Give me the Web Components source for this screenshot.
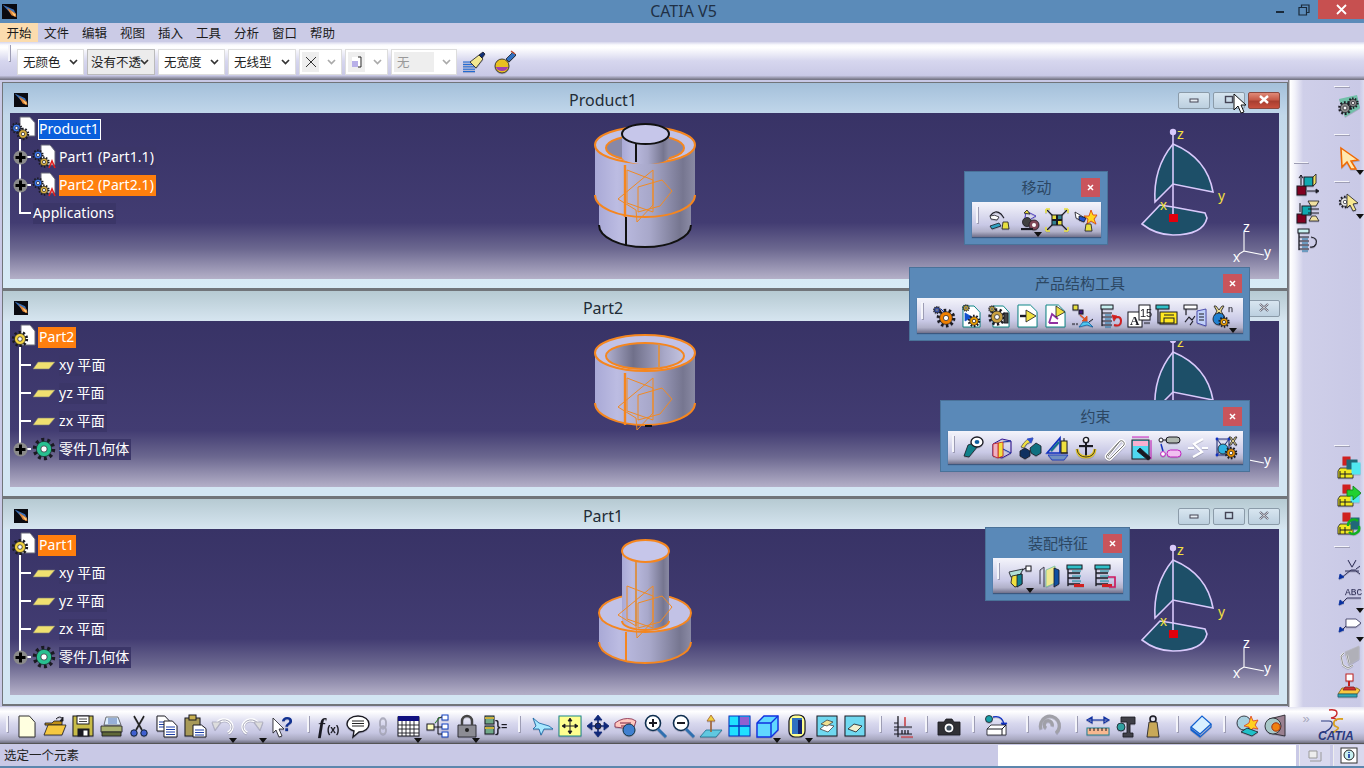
<!DOCTYPE html>
<html lang="zh">
<head>
<meta charset="utf-8">
<title>CATIA V5</title>
<style>
  html, body { margin: 0; height: 100%; overflow: hidden; background: #c9c9e6; }
  body { font-family: "Noto Sans", "Noto Sans CJK SC", sans-serif; }
</style>
</head>
<body>
<cat-app>
  <cat-titlebar slot="top" caption="CATIA V5"></cat-titlebar>
  <cat-menubar slot="top" items="开始,文件,编辑,视图,插入,工具,分析,窗口,帮助"></cat-menubar>
  <cat-toolbar slot="top" kind="top">
    <cat-grip w="17"></cat-grip>
    <cat-combo w="67" label="无颜色"></cat-combo>
    <cat-combo w="68" label="没有不透" grey></cat-combo>
    <cat-combo w="67" label="无宽度"></cat-combo>
    <cat-combo w="68" label="无线型"></cat-combo>
    <cat-combo w="43" glyph="x" off></cat-combo>
    <cat-combo w="43" glyph="pt" off></cat-combo>
    <cat-combo w="66" label="无" off></cat-combo>
    <cat-icon n="brush" w="28"></cat-icon>
    <cat-icon n="paint" w="28"></cat-icon>
  </cat-toolbar>

  <cat-mdi slot="left">
    <cat-doc-window caption="Product1" active>
      <cat-tree>
        <cat-node root icon="prod" label="Product1" sel="blue"></cat-node>
        <cat-node plus icon="comp" label="Part1 (Part1.1)"></cat-node>
        <cat-node plus icon="comp" label="Part2 (Part2.1)" sel="orange"></cat-node>
        <cat-node last label="Applications"></cat-node>
      </cat-tree>
      <cat-part kind="product"></cat-part>
      <cat-compass></cat-compass>
    </cat-doc-window>
    <cat-doc-window caption="Part2">
      <cat-tree>
        <cat-node root icon="partdoc" label="Part2" sel="orange"></cat-node>
        <cat-node icon="plane" label="xy 平面"></cat-node>
        <cat-node icon="plane" label="yz 平面"></cat-node>
        <cat-node icon="plane" label="zx 平面"></cat-node>
        <cat-node plus last icon="body" label="零件几何体"></cat-node>
      </cat-tree>
      <cat-part kind="part2"></cat-part>
      <cat-compass></cat-compass>
    </cat-doc-window>
    <cat-doc-window caption="Part1">
      <cat-tree>
        <cat-node root icon="partdoc" label="Part1" sel="orange"></cat-node>
        <cat-node icon="plane" label="xy 平面"></cat-node>
        <cat-node icon="plane" label="yz 平面"></cat-node>
        <cat-node icon="plane" label="zx 平面"></cat-node>
        <cat-node plus last icon="body" label="零件几何体"></cat-node>
      </cat-tree>
      <cat-part kind="part1"></cat-part>
      <cat-compass></cat-compass>
    </cat-doc-window>
  </cat-mdi>

  <cat-sidebar slot="right">
    <div slot="a">
      <cat-grip h style="margin-top:78px"></cat-grip>
      <cat-icon n="r1" w="28" style="margin-top:4px"></cat-icon>
      <cat-icon n="r2" w="28"></cat-icon>
      <cat-icon n="r3" w="28"></cat-icon>
    </div>
    <div slot="b">
      <cat-grip h style="margin-top:2px"></cat-grip>
      <cat-icon n="gears" w="30" style="margin-top:2px"></cat-icon>
      <cat-grip h style="margin-top:10px"></cat-grip>
      <cat-icon n="cursor" w="30" drop style="margin-top:6px"></cat-icon>
      <cat-grip h style="margin-top:5px"></cat-grip>
      <cat-icon n="selmode" w="30" drop style="margin-top:3px"></cat-icon>
      <cat-grip h style="margin-top:225px"></cat-grip>
      <cat-icon n="s1" w="30" style="margin-top:5px"></cat-icon>
      <cat-icon n="s2" w="30"></cat-icon>
      <cat-icon n="s3" w="30"></cat-icon>
      <cat-grip h style="margin-top:4px"></cat-grip>
      <cat-icon n="v1" w="30" style="margin-top:4px"></cat-icon>
      <cat-icon n="abc" w="30" drop></cat-icon>
      <cat-icon n="flag" w="30" drop style="margin-top:1px"></cat-icon>
      <cat-icon n="greyview" w="30" style="margin-top:4px"></cat-icon>
      <cat-icon n="stamp" w="30"></cat-icon>
    </div>
  </cat-sidebar>

  <cat-toolbar slot="bottom" kind="bottom">
    <cat-grip w="13"></cat-grip>
    <cat-icon n="new" w="28"></cat-icon><cat-icon n="open" w="28"></cat-icon><cat-icon n="save" w="28"></cat-icon>
    <cat-icon n="print" w="28"></cat-icon><cat-icon n="cut" w="28"></cat-icon><cat-icon n="copy" w="28"></cat-icon>
    <cat-icon n="paste" w="28"></cat-icon><cat-icon n="undo" w="28" drop></cat-icon><cat-icon n="redo" w="30" drop></cat-icon>
    <cat-icon n="help" w="32"></cat-icon>
    <cat-grip w="17"></cat-grip>
    <cat-icon n="fx" w="28"></cat-icon><cat-icon n="comment" w="28"></cat-icon><cat-icon n="chain" w="22"></cat-icon>
    <cat-icon n="table" w="28" drop></cat-icon><cat-icon n="links" w="32"></cat-icon><cat-icon n="lock" w="26" drop></cat-icon>
    <cat-icon n="formula" w="30"></cat-icon>
    <cat-grip w="18"></cat-grip>
    <cat-icon n="fly" w="28"></cat-icon><cat-icon n="fit" w="28"></cat-icon><cat-icon n="pan" w="28"></cat-icon>
    <cat-icon n="rotate" w="28"></cat-icon><cat-icon n="zoomin" w="29"></cat-icon><cat-icon n="zoomout" w="28"></cat-icon>
    <cat-icon n="normal" w="28"></cat-icon><cat-icon n="multi" w="28"></cat-icon><cat-icon n="cube" w="28" drop></cat-icon>
    <cat-icon n="shade" w="32" drop></cat-icon><cat-icon n="hide" w="28"></cat-icon><cat-icon n="swap" w="28"></cat-icon>
    <cat-grip w="21"></cat-grip>
    <cat-icon n="dims" w="24"></cat-icon>
    <cat-grip w="23"></cat-grip>
    <cat-icon n="camera" w="24"></cat-icon>
    <cat-grip w="23"></cat-grip>
    <cat-icon n="catalog" w="24"></cat-icon>
    <cat-grip w="20" style="margin-left:9px"></cat-grip>
    <cat-icon n="update" w="24"></cat-icon>
    <cat-grip w="20" style="margin-left:5px"></cat-grip>
    <cat-icon n="measure" w="24"></cat-icon><cat-icon n="inertia" w="32"></cat-icon><cat-icon n="weight" w="22"></cat-icon>
    <cat-grip w="26"></cat-grip>
    <cat-icon n="book" w="22"></cat-icon>
    <cat-grip w="24"></cat-grip>
    <cat-icon n="sim" w="24"></cat-icon><cat-icon n="render" w="30"></cat-icon>
    <cat-more></cat-more>
    <cat-logo></cat-logo>
  </cat-toolbar>
  <cat-statusbar slot="bottom" message="选定一个元素"></cat-statusbar>

  <cat-float-bar slot="float" caption="移动" style="left:964px;top:171px;width:144px">
    <cat-icon n="m1" w="29"></cat-icon><cat-icon n="m2" w="29" drop></cat-icon><cat-icon n="m3" w="29"></cat-icon><cat-icon n="m4" w="29"></cat-icon>
  </cat-float-bar>
  <cat-float-bar slot="float" caption="产品结构工具" style="left:909px;top:267px;width:341px">
    <cat-icon n="p1" w="28"></cat-icon><cat-icon n="p2" w="28"></cat-icon><cat-icon n="p3" w="28"></cat-icon><cat-icon n="p4" w="28"></cat-icon>
    <cat-icon n="p5" w="28"></cat-icon><cat-icon n="p6" w="28"></cat-icon><cat-icon n="p7" w="28"></cat-icon><cat-icon n="p8" w="28"></cat-icon>
    <cat-icon n="p9" w="28"></cat-icon><cat-icon n="p10" w="28"></cat-icon><cat-icon n="p11" w="28" drop></cat-icon>
  </cat-float-bar>
  <cat-float-bar slot="float" caption="约束" style="left:940px;top:400px;width:310px" inner="33">
    <cat-icon n="c1" w="28"></cat-icon><cat-icon n="c2" w="28"></cat-icon><cat-icon n="c3" w="28"></cat-icon><cat-icon n="c4" w="28"></cat-icon>
    <cat-icon n="c5" w="28"></cat-icon><cat-icon n="c6" w="28"></cat-icon><cat-icon n="c7" w="28"></cat-icon><cat-icon n="c8" w="28"></cat-icon>
    <cat-icon n="c9" w="28"></cat-icon><cat-icon n="c10" w="28"></cat-icon>
  </cat-float-bar>
  <cat-float-bar slot="float" caption="装配特征" style="left:985px;top:527px;width:145px">
    <cat-icon n="a1" w="29" drop></cat-icon><cat-icon n="a2" w="29"></cat-icon><cat-icon n="a3" w="28"></cat-icon><cat-icon n="a4" w="28"></cat-icon>
  </cat-float-bar>
  <cat-pointer slot="float" style="left:1233px;top:93px"></cat-pointer>
</cat-app>

<script>
// icon helpers, all drawn in a 24x24 box
const K = '#1a1a22';
const gear = (x, y, r, c = '#f2a400') => {
    const d = Math.PI * r / 10;
    return `<circle cx="${x}" cy="${y}" r="${r}" fill="none" stroke="${K}" stroke-width="${r * .5}" stroke-dasharray="${d} ${d}"/>
    <circle cx="${x}" cy="${y}" r="${r * .85}" fill="${c}" stroke="${K}" stroke-width=".7"/>
    <circle cx="${x}" cy="${y}" r="${r * .35}" fill="#fff" stroke="${K}" stroke-width=".7"/>`;
};
const doc = (x, y, w, h, f = '#fff', s = K) =>
    `<path d="M${x} ${y}h${w * .65}l${w * .35} ${h * .3}V${y + h}H${x}z" fill="${f}" stroke="${s}" stroke-width="1"/>`;
const lines = (x, y, w, n, c = '#1c3fa8', step = 2.5) => {
    let o = '';
    for (let i = 0; i < n; i++) o += `<path d="M${x} ${y + i * step}h${w}" stroke="${c}" stroke-width="1"/>`;
    return o;
};
const box = (x, y, w, h, f, s = K) => `<rect x="${x}" y="${y}" width="${w}" height="${h}" fill="${f}" stroke="${s}" stroke-width="1"/>`;
const ln = (d, c = K, w = 1) => `<path d="${d}" fill="none" stroke="${c}" stroke-width="${w}"/>`;
const fl = (d, f, s = K, w = .8) => `<path d="${d}" fill="${f}" stroke="${s}" stroke-width="${w}"/>`;
const txt = (x, y, s, size, c = K, extra = '') => `<text x="${x}" y="${y}" font-size="${size}" fill="${c}" ${extra}>${s}</text>`;
const ball = (x, y, r, c) => `<circle cx="${x}" cy="${y}" r="${r}" fill="${c}" stroke="${K}" stroke-width=".8"/>`;
const weightMark = (x, y) => fl(`M${x} ${y}h5l1 7h-7z`, '#e8e040', K, .8);
const ICONS = {
    // top bar
    brush: lines(1, 12, 12, 5, '#1060d0', 2.4) + fl('M8 12l9-7 4 4-7 9z', '#f4e890') + fl('M17 5l4-3 2 2-3 4z', '#103078'),
    paint: ball(9, 16, 7, '#e8c020') + fl('M3 17a6 4 0 0 0 12 0', '#a040b0', 'none') + fl('M13 9l7-7 3 3-7 7z', '#3070c0') + ln('M18 1l4 3', '#c05030', 1.5),
    // bottom bar, file
    new: doc(4, 2, 16, 21, '#ffffe0', '#333'),
    open: fl('M2 9h7l2-2h8v4H2z', '#c09018') + fl('M1 21l4-10h18l-4 10z', '#f6c840') + ln('M13 5q4-4 7 0', K) + fl('M20 3v4h-3z', K),
    save: box(2, 2, 20, 20, '#c8bc48') + box(6, 2, 12, 8, '#fff') + lines(8, 5, 8, 2, '#444') + box(7, 15, 11, 7, K) + box(13, 17, 3, 4, '#fff', '#fff'),
    print: fl('M7 3h12l3 8H5z', '#ddeeff', '#555') + lines(9, 5, 9, 3, '#5070b0', 2) + fl('M2 12h21v6H2z', '#a8b070') + fl('M3 18h19v4H3z', '#606838'),
    cut: ln('M7 2l8 14M17 2L9 16', '#222', 1.6) + `<circle cx="7" cy="19" r="3.2" fill="#4060d0" stroke="#123"/><circle cx="17" cy="19" r="3.2" fill="#4060d0" stroke="#123"/>`,
    copy: doc(2, 2, 12, 15) + lines(4, 8, 7, 3) + doc(9, 7, 13, 16) + lines(11, 13, 9, 4),
    paste: box(2, 4, 15, 18, '#a89a58') + box(6, 1, 7, 5, '#c8b050') + doc(10, 11, 13, 12) + lines(12, 16, 9, 3),
    undo: ln('M5 13a8 7 0 1 1 12 6', '#fff', 3.4) + ln('M5 13a8 7 0 1 1 12 6', '#aab', 1) + fl('M1 8l9 0-6 8z', '#ddd', '#aab'),
    redo: ln('M19 13a8 7 0 1 0-12 6', '#fff', 3.4) + ln('M19 13a8 7 0 1 0-12 6', '#aab', 1) + fl('M23 8l-9 0 6 8z', '#ddd', '#aab'),
    help: fl('M2 4l11 11-5 0 3 7-3 1-3-7-3 3z', '#fff') + txt(10, 17, '?', 20, '#103090', 'font-weight="700"'),
    // formula, comment
    fx: txt(0, 19, 'f', 21, K, 'font-family="Liberation Serif" font-style="italic" font-weight="700"') + txt(9, 19, '(x)', 10, K, 'font-weight="700"'),
    comment: fl('M12 2c7 0 11 4 11 8s-4 8-10 8l-6 5 1-6c-4-1-7-4-7-7 0-4 4-8 11-8z', '#fff', K, 1.4) + lines(6, 7, 12, 3, '#222', 2.5),
    chain: ln('M9 8a3 4 0 1 1 6 0v2a3 4 0 1 1-6 0zM9 16a3 4 0 1 1 6 0 3 4 0 1 1-6 0z', '#aab', 1.6),
    table: box(2, 3, 21, 19, '#fff') + `<rect x="2" y="2" width="21" height="5" fill="#101080"/>` + ln('M2 11h21M2 15h21M2 19h21M6 7v15M10 7v15M14 7v15M18 7v15', K, .9),
    links: box(16, 1, 6, 5, '#fff', '#1040c0') + box(16, 10, 6, 5, '#fff', '#1040c0') + box(16, 18, 6, 5, '#fff', '#1040c0') + box(1, 10, 7, 6, '#ffffc0') + ln('M8 13h4M12 4v16M12 4l4-1M12 13h4M12 20h4', K) + ln('M9 9l5-6', '#208020'),
    lock: fl('M3 11h18v12H3z', '#8c8c94') + ln('M7 11V7a5 5 0 0 1 10 0v4', '#444', 2.4) + `<circle cx="12" cy="16" r="2" fill="#222"/>`,
    formula: box(2, 2, 9, 8, '#70a888') + box(2, 12, 9, 8, '#70a888') + ln('M2 4h9M2 14h9', '#c8b040', 2) + txt(12, 18, '}', 17, K) + txt(18, 16, '=', 11, K),
    // view bar
    fly: fl('M3 4l6 5 10 3 4 3-9 0-3 6-2-6-6 0 3-3z', '#a8e8ff', '#1060a0'),
    fit: box(1, 2, 22, 20, '#ffff90', '#1a8888') + ln('M12 5v14M5 12h14', K, 1) + fl('M12 4l2 3h-4zM12 20l2-3h-4zM4 12l3-2v4zM20 12l-3-2v4z', K),
    pan: ln('M12 3v18M3 12h18', '#102878', 1.6) + fl('M12 1l4 5H8zM12 23l4-5H8zM1 12l5-4v8zM23 12l-5-4v8z', '#102878', '#102878') + ball(12, 12, 3, '#102878'),
    rotate: fl('M1 9q8-6 17-4l4 2-2 6-11 1-8-1z', '#ffc8c0', '#802040') + ln('M6 9h11M7 12h10', '#802040') + `<circle cx="15" cy="16" r="6" fill="#4080d0" stroke="#134"/>`,
    zoomin: `<circle cx="10" cy="9" r="7.5" fill="#fff" stroke="#103050" stroke-width="1.6"/>` + ln('M15 15l8 8', '#3070b0', 3) + ln('M6 9h8M10 5v8', K, 2),
    zoomout: `<circle cx="10" cy="9" r="7.5" fill="#fff" stroke="#103050" stroke-width="1.6"/>` + ln('M15 15l8 8', '#3070b0', 3) + ln('M6 9h8', K, 2),
    normal: fl('M7 16h16l-6 7H1z', '#60c8e0', '#207090') + ln('M12 18V5', '#a06030', 1.5) + fl('M12 1l4 6H8z', '#f0d040', '#a06030'),
    multi: box(2, 2, 21, 20, '#20e0ff', '#0830c0') + ln('M12 2v20M2 12h21', '#0830c0', 1.4) + `<rect x="13" y="3" width="9" height="8" fill="#9060d0"/>`,
    cube: fl('M2 9l7-7h14v14l-7 7H2z', '#60d8ff', '#1030e0', 1.4) + ln('M2 9h14v14M16 9l7-7', '#1030e0', 1.4),
    shade: `<rect x="4" y="1" width="16" height="22" rx="6" fill="#ffff90" stroke="${K}" stroke-width="1.2"/><rect x="7" y="4" width="10" height="16" fill="#3070c0"/><rect x="13" y="6" width="4" height="14" fill="#102070"/>`,
    hide: box(2, 2, 20, 20, '#70d8f0', K) + fl('M5 15l6-5 8 2-6 6z', '#fff', '#444') + fl('M6 10l6-4 6 2-6 4z', '#f0e090', '#444'),
    swap: box(2, 2, 20, 20, '#70d8f0', K) + fl('M5 15l6-5 8 2-6 6z', '#f0f0d0', K),
    dims: ln('M8 2v21M4 20h18M4 13h18M4 16h4M4 9h4M12 16v4M15 16v4M18 16v4', K, 1.2) + ln('M15 3v9M11 23h12', '#d02020', 1.2),
    camera: fl('M1 8h6l2-3h6l2 3h6v13H1z', '#303034') + `<circle cx="12" cy="14" r="5" fill="#fff" stroke="${K}"/><circle cx="12" cy="14" r="2.6" fill="#405060"/>`,
    catalog: ball(5, 5, 3.5, '#18a0a8') + ln('M9 3q9-2 11 7', '#1030c0', 1.3) + fl('M20 13l-3-4h6z', '#1030c0', '#1030c0') + fl('M3 15l4-4h15v10H3z', '#fff') + ln('M3 15h15v6M18 15l4-4', K),
    update: ln('M4 15a9.500 9.500 0 1 1 15 4M9 14a4 4 0 1 1 6-2', '#a0a0a8', 3.2),
    measure: ln('M3 6h19', '#1030a0', 1.2) + fl('M1 6l5-3v6zM23 6l-5-3v6z', 'none', '#1030a0', 1.2) + box(1, 14, 22, 7, '#f8b890', '#208090') + ln('M4 14v3M8 14v3M12 14v3M16 14v3M20 14v3', K),
    inertia: fl('M7 3h14v7h-5v9h3v4H9v-4h4V8H7z', '#404048') + ball(7, 13, 4, '#30a0a0'),
    weight: `<circle cx="12" cy="5" r="3" fill="none" stroke="${K}" stroke-width="1.5"/>` + fl('M8 8h8l2 15H6z', '#c8a858'),
    book: fl('M2 13L13 2l9 8-11 10z', '#d8f0ff', '#1060d0', 1.2) + ln('M2 13v3l9 7 11-10v-3M2 15l9 7', '#1060d0', 1.2),
    sim: ball(8, 9, 7, '#a8d0e0') + fl('M15 2l2 5 5-1-3 5 3 4-5-1-3 4-1-5-5-1 5-3z', '#ffd020', '#e04020') + fl('M5 18l6-4 11 4-6 4z', '#20c0c8'),
    render: fl('M6 5l16-4v21l-16-3z', '#9a8090') + ball(10, 12, 8, '#a8c8c8') + `<circle cx="13" cy="13" r="4.2" fill="#f08010" stroke="#a03010"/>`,
    // sidebar
    r1: box(1, 14, 9, 9, '#800020') + box(8, 5, 9, 9, '#10a8b0') + fl('M17 5l3-3v9l-3 3z', '#f0e060') + ln('M5 13V3M5 3l-2 3M5 3l2 3M11 19h11', K) + fl('M23 19l-3-2v4z', K),
    r2: box(1, 14, 9, 9, '#800020') + box(6, 6, 9, 9, '#10a8b0') + fl('M12 1h11l-3 5h-5zM13 21h10l-3-5h-4z', '#f0e0a0') + ln('M4 12V3', K) + ln('M12 9h11M12 13h11', K),
    r3: box(2, 1, 11, 4, '#c8f0f0') + ln('M3 5v17M3 9h10M3 13h10M3 17h10M3 21h10', K, 1.2) + ln('M15 9q7 1 5 7-2 4-6 3', K, 1.2) + lines(6, 11, 6, 4, '#1c78a8', 4),
    gears: fl('M2 5l18-4 3 13-15 9z', '#70c0a8', 'none') + gear(8, 14, 5.5, '#888') + gear(16, 9, 4.5, '#888'),
    cursor: fl('M4 2l17 12-7 1 5 8-5 0-4-7-5 5z', '#ffe8b0', '#f06800', 1.5),
    selmode: gear(8, 12, 5, '#eee') + fl('M10 4l11 9-5 1 3 6-3 1-3-6-3 3z', '#f8e890'),
    s1: fl('M1 15l2-3h13v10H1z', '#f0e820') + box(6, 1, 7, 8, '#d02020', '#d02020') + box(10, 4, 10, 9, '#206878', '#206878') + box(15, 7, 8, 11, '#50e8f0', '#50e8f0') + ln('M3 15v7M8 15v7M3 18h12', K),
    s2: fl('M1 15l2-3h13v10H1z', '#f0e820') + box(6, 1, 7, 8, '#d02020', '#d02020') + box(14, 7, 8, 11, '#50e8f0', '#50e8f0') + ln('M3 15v7M8 15v7M3 18h12', K) + fl('M10 6h6V2l8 7-8 7v-4h-6z', '#20d030', '#108010'),
    s3: fl('M1 15l2-3h13v10H1z', '#f0e820') + box(6, 1, 7, 8, '#d02020', '#d02020') + box(14, 6, 8, 11, '#206878', '#206878') + ln('M3 15v7M8 15v7M3 18h12', K) + ln('M11 14a6 6 0 0 1 10-5M22 14a6 6 0 0 1-10 6', '#10b020', 2.4),
    v1: ln('M4 22l10-8h5M8 15h14M19 13l4-3M19 15l4 3M11 4l4 7 4-7', '#303058', 1) + fl('M2 23l1-5 4 3z', '#0830a0', '#0830a0'),
    abc: ln('M4 20l6-6h14', '#303058', 1) + txt(8, 11, 'ABC', 9.5, '#303058', 'font-family="Liberation Mono"') + fl('M2 21l1-5 4 3z', '#0830a0', '#0830a0'),
    flag: ln('M4 18l6-6', '#303058', 1) + fl('M9 6h10l5 4-5 4H9z', '#fff', '#303058') + fl('M2 19l1-5 4 3z', '#0830a0', '#0830a0'),
    greyview: fl('M8 7l14-6v13l-10 6z', '#b0b0b8', '#b8b8c0') + ln('M7 8l-3 3 2 9 5 3 5-3M10 10l2 8', '#eee', 2) + ln('M7 8l-3 3 2 9 5 3 5-3M10 10l2 8', '#777', .8),
    stamp: box(9, 1, 7, 7, '#fff', '#c02020') + ln('M12 8v5', '#c02020', 2) + fl('M5 15h15l3 2-3 4H1z', '#f8c840', '#806020') + fl('M1 21h19v3H1z', '#30a8b8', '#206070') + fl('M8 14h9l2 3H6z', '#d03030', '#802020'),
    // move bar
    m1: ln('M3 8q5-7 11-2l3 4', K, 1.1) + fl('M3 8q5-2 9 1l-2 3-6-1z', '#fff') + fl('M3 18l9-3 2 3-9 3z', '#30a0c0') + weightMark(16, 14),
    m2: ball(11, 14, 4.5, '#404040') + ball(18, 17, 5, '#804858') + `<circle cx="18" cy="17" r="2" fill="#fff"/>` + ln('M9 10l1-7 10 5-5 3', '#5040c0') + ln('M5 21h12', K, 2) + fl('M8 5l3-3 3 4z', '#f0e040'),
    m3: ln('M2 2l6 6M22 2l-6 6M2 22l6-6M22 22l-6-6', K, 1.1) + `<path d="M1 1h4M1 1v4M23 1h-4M23 1v4M1 23h4M1 23v-4M23 23h-4M23 23v-4" stroke="#e8e040" stroke-width="1.6" fill="none"/>` + box(7, 7, 4.5, 4.5, '#e8e040') + box(12.5, 7, 4.5, 4.5, '#308090') + box(7, 12.5, 4.5, 4.5, '#308090') + box(12.5, 12.5, 4.5, 4.5, '#e8e040'),
    m4: fl('M1 4l10 6-3 3-6-3z', '#fff') + fl('M5 8l7 2-2 4-5-2z', '#2050d0') + fl('M17 2l2 5 4 0-3 4 2 5-5-3-4 3 1-5-4-3h5z', '#ffd820', '#e04000') + weightMark(12, 16),
    // structure bar
    p1: gear(15, 14, 7.5, '#f08000') + gear(6, 6, 3.2, '#4060d0') + ln('M10 5l3 3', '#1030a0'),
    p2: doc(4, 2, 17, 21, '#fff', '#108888') + gear(7, 4, 3, '#f0d040') + fl('M6 9l7 4-7 4z', '#1050d0', '#1050d0') + gear(15, 17, 5, '#f0a000'),
    p3: doc(6, 2, 16, 21, '#fff', '#108888') + gear(10, 13, 7, '#c8a040') + gear(5, 5, 3, '#f0d040') + box(17, 9, 4, 10, '#444'),
    p4: doc(3, 1, 19, 22, '#fff', '#108888') + ln('M5 12h8', K, 2.4) + fl('M11 6l10 6-10 6z', '#f0e040'),
    p5: doc(3, 1, 19, 22, '#fff', '#108888') + ln('M6 19l3-9 6 5M6 19h9', '#9030a0', 1.8) + fl('M13 2l9 6-9 5z', '#f0e040'),
    p6: box(2, 1, 5, 5, '#e8e040') + box(8, 6, 4, 4, '#401880') + ln('M9 11l5 4', '#e05020', 1.4) + fl('M16 12v5h-5z', '#e05020', '#e05020') + fl('M8 23l4-5 5 0 5 5-6-2z', '#50c8f0', '#1060a0') + ln('M1 20h3M5 20h2M18 18l4-3', K),
    p7: box(2, 1, 12, 4, '#c8f0f0') + ln('M3 5v17M3 9h10M3 13h10M3 17h10M3 21h10', K, 1.2) + lines(6, 11, 6, 4, '#1c78a8', 4) + ln('M15 14q7-3 7 3t-7 4', '#d02020', 2) + fl('M13 11l5 1-3 5z', '#d02020', '#d02020'),
    p8: box(1, 8, 14, 15, '#fff') + txt(3, 21, 'A', 13, K, 'font-weight="700" font-family="Liberation Serif"') + box(12, 1, 11, 15, '#fff') + txt(13, 13, '15', 11, K) + ln('M17 19h6', K),
    p9: box(1, 1, 13, 4, '#30c0c8') + box(5, 8, 17, 12, '#ffe820') + box(9, 14, 10, 5, '#ffe820') + ln('M3 5v14h6M9 11h10', K, 1.1),
    p10: box(1, 1, 13, 4, '#fff') + fl('M14 7l9-2v17l-9-3z', '#c0d0f8', '#3030a0') + ln('M3 5v6M2 18l4-5 3 3 3-4M7 21l3-4M16 10h5M16 13h5M16 16h5', K, 1.1),
    p11: fl('M3 2l2 0 3 4 3-4 2 0-3 5 3 5h-2l-3-4-3 4H3l3-5z', '#f0e090') + ball(8, 15, 6, '#2080d0') + gear(13, 18, 4.5, '#f0a000') + txt(17, 8, 'n', 9, K),
    // constraint bar
    c1: fl('M2 20l4-11 8-3 2 4-9 11z', '#10808a') + `<ellipse cx="15" cy="6" rx="6" ry="5" fill="#fff" stroke="${K}" stroke-width="1.3"/>` + `<ellipse cx="15" cy="6" rx="2.4" ry="2" fill="#1060a0"/>`,
    c2: fl('M3 8l9-5 9 2v12l-9 5-9-2z', '#fff0', '#301090', 1) + fl('M8 7l5-1v14l-5 2z', '#f0e040', '#c02020') + fl('M3 8l5-1v15l-5-2z', '#f0b0c0', '#c02020') + ln('M13 6l8-1M13 13l8 4', '#1030a0'),
    c3: fl('M12 12l6-5 5 3v7l-5 3-5-3z', '#107080') + fl('M2 15l5-3 5 3v5l-5 3-5-3z', '#103060') + fl('M3 11q5-9 12-9l-2 4q-5 1-7 6z', '#f0e040', '#555') + fl('M9 3l6-1-2 5z', '#3050d0', '#3050d0'),
    c4: fl('M1 17L14 2v15z', '#fff0', '#1030c0', 1.6) + ln('M5 15l8-9', '#107090', 2) + box(15, 5, 6, 12, '#f0e040') + ln('M18 5V2M15 17h7', K) + fl('M2 19h20l-4 5H6z', '#7090c0', '#1030c0'),
    c5: ln('M12 6v14M5 10h14', K, 2) + `<circle cx="12" cy="4" r="2.6" fill="#fff" stroke="${K}" stroke-width="1.4"/>` + ln('M3 13q1 8 9 8t9-8', '#e8c820', 3) + ln('M3 13q1 8 9 8t9-8', K, .8),
    c6: ln('M6 20L18 5a3 3 0 0 1 4 4L9 22a2 2 0 0 1-4-3L17 6', '#fff', 3.2) + ln('M6 20L18 5a3 3 0 0 1 4 4L9 22a2 2 0 0 1-4-3L17 6', '#777', 1),
    c7: box(2, 4, 17, 19, '#50d8f0') + `<rect x="3" y="5" width="15" height="5" fill="#f8b0d0"/>` + fl('M10 12l11 10-3 2-11-9z', K) + ln('M2 1h17M21 4v19', '#d020c0', 1),
    c8: `<rect x="8" y="1" width="14" height="6" rx="3" fill="#b0b8b0" stroke="${K}"/><circle cx="3" cy="4" r="2" fill="#fff" stroke="${K}"/>` + ln('M5 4h4', K) + ln('M3 8l2 7', '#1030c0', 1.4) + `<rect x="9" y="14" width="14" height="7" rx="3.5" fill="#f0c0f0" stroke="#c020c0"/><circle cx="5" cy="18" r="2.4" fill="#fff" stroke="#c020c0"/>`,
    c9: ln('M17 3l-9 5 4 4M7 21l9-5-4-4M2 12h6M16 12h6', '#fff', 2.2),
    c10: ln('M3 3h12v16H3zM3 3l12 16M15 3L3 19', '#102070', .9) + `<circle cx="3" cy="3" r="1.4" fill="#1030c0"/><circle cx="15" cy="3" r="1.4" fill="#1030c0"/><circle cx="3" cy="19" r="1.4" fill="#1030c0"/>` + ball(9, 13, 5, '#30b0e0') + fl('M15 1h2l2 3 2-3h2l-3 4 3 4h-2l-2-3-2 3h-2l3-4z', '#f0e090') + gear(17, 17, 5, '#e89000'),
    // assembly bar
    a1: fl('M1 8l14-3-3 6-9 2z', '#b0e0d8') + fl('M4 12l10-2v10l-7 3-4-4z', '#f0e040') + box(18, 2, 5, 5, '#fff') + fl('M9 11l5-1v10l-5 3z', '#108090') + ln('M14 6l4-2', K),
    a2: ln('M3 6v14M7 3v20', '#445', 1) + fl('M9 6l9-4v17l-9 4z', '#f0e890', '#70c0a0') + fl('M17 4l5 2v14l-5 3z', '#1050a0') + ln('M3 6l4-3', '#445', 1),
    a3: box(2, 1, 15, 4, '#30c0c8') + ln('M3 5v17M3 9h12M3 14h12M3 20h12', K, 1.3) + lines(7, 7, 9, 3, '#1090a0', 5) + `<rect x="9" y="20" width="10" height="3" fill="#d02020"/>`,
    a4: box(2, 1, 15, 4, '#30c0c8') + ln('M3 5v17M3 9h12M3 14h12M3 20h12', K, 1.3) + lines(7, 7, 9, 3, '#1090a0', 5) + `<rect x="9" y="20" width="10" height="3" fill="#d02020"/>` + ln('M15 13h7v10h-6', '#d01860', 1.6),
    // tree
    prod: doc(8, 0, 15, 19, '#fff', '#667') + gear(4.5, 11, 4.5, '#3a78f0') + gear(11, 17, 5, '#d8b040'),
    comp: doc(9, 0, 14, 20, '#fff', '#667') + gear(6, 10, 4.5, '#3a78f0') + gear(12, 17, 4.5, '#d8b040') + ln('M17 23l3-7 3 7', '#e02020', 1.6),
    partdoc: doc(9, 0, 14, 20, '#fff', '#667') + gear(8, 14, 6.5, '#f0d040'),
    plane: fl('M6 9h17l-6 7H1z', '#f0e070', '#777', .6),
    body: gear(12, 12, 9, '#28c090'),
    star: `<rect width="24" height="24" fill="#0a0a10"/><path d="M1 1L19 9l4 9-9-3z" fill="#3a70b8"/><path d="M8 6l14 9 1 6-8-3z" fill="#e08030"/><path d="M14 11l8 6-2 3z" fill="#ffd080"/>`
};

class CatApp extends HTMLElement {
    constructor() {
        super();
        this.attachShadow({ mode: 'open' });
        this.shadowRoot.innerHTML = `
        <style>
            :host { display: flex; flex-direction: column; width: 1364px; height: 768px; position: relative; overflow: hidden; background: #c9c9e6; }
            .mid { display: flex; flex: 1; min-height: 0; }
            ::slotted(cat-float-bar), ::slotted(cat-pointer) { position: absolute; }
        </style>
        <slot name="top"></slot>
        <div class="mid"><slot name="left"></slot><slot name="right"></slot></div>
        <slot name="bottom"></slot>
        <slot name="float"></slot>`;
    }
}

class CatTitlebar extends HTMLElement {
    constructor() {
        super();
        this.attachShadow({ mode: 'open' });
    }
    connectedCallback() {
        this.shadowRoot.innerHTML = `
        <style>
            :host { display: flex; align-items: flex-start; height: 23px; background: #5b8bb9; color: #1f3045; font: 16px/23px "Noto Sans", sans-serif; }
            .logo { width: 15px; height: 15px; margin: 4px 0 0 2px; }
            .cap { flex: 1; text-align: center; padding-left: 82px; }
            .btn { display: flex; align-items: center; justify-content: center; width: 24px; height: 19px; }
            .close { width: 46px; background: #c75050; margin-left: 2px; }
        </style>
        <svg class="logo" viewBox="0 0 24 24">${ICONS.star}</svg>
        <div class="cap">${this.getAttribute('caption')}</div>
        <div class="btn"><svg width="10" height="10" viewBox="0 0 10 10"><path d="M1 7h8" stroke="#1a2a3a" stroke-width="2"/></svg></div>
        <div class="btn"><svg width="12" height="12" viewBox="0 0 12 12"><path d="M1 3.500h7.500V11H1zM3.500 3V1H11v7.500H9" fill="none" stroke="#1a2a3a" stroke-width="1.200"/></svg></div>
        <div class="btn close"><svg width="11" height="11" viewBox="0 0 11 11"><path d="M1 1l9 9M10 1l-9 9" stroke="#fff" stroke-width="1.800"/></svg></div>`;
    }
}

class CatMenubar extends HTMLElement {
    constructor() {
        super();
        this.attachShadow({ mode: 'open' });
    }
    connectedCallback() {
        const items = this.getAttribute('items').split(',');
        this.shadowRoot.innerHTML = `
        <style>
            :host { display: flex; height: 19px; background: #cbcbe6; color: #1c1c1c; font: 12.5px/19px "Noto Sans CJK SC", sans-serif; }
            span { width: 25px; padding: 0 6.5px; text-align: center; }
            span:first-of-type { background: #fbdcae; padding: 0 6px 0 6.5px; }
        </style>
        ${items.map(i => `<span>${i}</span>`).join('')}`;
    }
}

class CatToolbar extends HTMLElement {
    constructor() {
        super();
        this.attachShadow({ mode: 'open' });
        this.shadowRoot.innerHTML = `
        <style>
            :host { display: flex; align-items: center; box-sizing: border-box; }
            :host([kind="top"]) {
                height: 38px; gap: 3px; padding-top: 1px;
                background: linear-gradient(#d6d6ec 0, #fbfbfe 8%, #fff 15%, #d6d6ee 50%, #c9c9e6 88%, #8a8a9c 96%, #6e6e7c 100%);
            }
            :host([kind="top"]) ::slotted(cat-grip) { margin-right: -3px; align-self: flex-start; height: 22px; }
            :host([kind="bottom"]) {
                height: 36px; padding-top: 1px;
                background: linear-gradient(#e4e4f2 0, #fff 12%, #d8d8ee 45%, #c6c6e2 72%, #a8a8c0 90%, #6f6f80 100%);
            }
        </style>
        <slot></slot>`;
    }
}

class CatGrip extends HTMLElement {
    constructor() {
        super();
        this.attachShadow({ mode: 'open' });
    }
    connectedCallback() {
        const w = this.getAttribute('w') || 30;
        const horiz = this.hasAttribute('h');
        this.shadowRoot.innerHTML = `
        <style>
            :host { display: flex; align-items: center; justify-content: center; flex: none; box-sizing: border-box; }
            :host([h]) { justify-content: flex-start; }
            i { display: block; background: #f4f4fa; box-shadow: 1px 1px 0 #9d9db4; }
        </style>
        <i style="${horiz ? 'width:15px;height:1px' : 'width:2px;height:17px;margin-bottom:4px'}"></i>`;
        this.style.width = horiz ? '30px' : w + 'px';
        if (horiz) this.style.height = '8px';
    }
}

class CatIcon extends HTMLElement {
    constructor() {
        super();
        this.attachShadow({ mode: 'open' });
    }
    connectedCallback() {
        const w = this.getAttribute('w') || 28;
        this.shadowRoot.innerHTML = `
        <style>
            :host { display: flex; align-items: center; justify-content: center; position: relative; flex: none; height: 28px; font-family: "Liberation Sans", sans-serif; }
            svg.i { flex: none; overflow: visible; filter: drop-shadow(0 1px 0 rgba(110,110,130,.35)); }
            .drop { position: absolute; right: 0; bottom: -3px; width: 0; height: 0; border: 4px solid transparent; border-top: 5px solid #111; border-bottom: 0; }
        </style>
        <svg class="i" width="24" height="24" viewBox="0 0 24 24">${ICONS[this.getAttribute('n')] || ''}</svg>
        ${this.hasAttribute('drop') ? '<span class="drop"></span>' : ''}`;
        this.style.width = w + 'px';
    }
}

class CatCombo extends HTMLElement {
    constructor() {
        super();
        this.attachShadow({ mode: 'open' });
    }
    connectedCallback() {
        const off = this.hasAttribute('off');
        const glyph = this.getAttribute('glyph');
        let inner = `<span class="t">${this.getAttribute('label') || ''}</span>`;
        if (glyph === 'x') inner = `<span class="t"><svg width="12" height="12" viewBox="0 0 12 12"><path d="M1 1l10 10M11 1L1 11" stroke="#333" fill="none"/></svg></span>`;
        if (glyph === 'pt') inner = `<span class="t"><svg width="12" height="12" viewBox="0 0 12 12"><rect x="1" y="1" width="10" height="10" fill="#fff"/><rect x="1" y="5" width="6" height="6" fill="#b8b0e8"/><path d="M7 1h3v10H7" fill="none" stroke="#222"/></svg></span>`;
        this.shadowRoot.innerHTML = `
        <style>
            :host { display: flex; align-items: center; flex: none; box-sizing: border-box; height: 26px; background: #fff; border: 1px solid #ddd; color: #222; font: 12.5px/24px "Noto Sans CJK SC", sans-serif; }
            :host([grey]) { background: #ececec; border-color: #bbb; }
            :host([off]) { color: #999; background: #fff; }
            .t { flex: 1; min-width: 0; white-space: nowrap; padding-left: 5px; display: flex; align-items: center; height: 24px; }
            :host([grey]) .t { padding-left: 3px; }
            :host([off]) .t { background: #eeeeee; margin: 2px 8px 2px 2px; height: 20px; padding-left: 3px; }
            svg.c { flex: none; margin-right: 5px; }
        </style>
        ${inner}
        <svg class="c" width="9" height="6" viewBox="0 0 9 6"><path d="M1 1l3.500 3.500L8 1" fill="none" stroke="${off ? '#aaa' : '#333'}" stroke-width="1.700"/></svg>`;
        this.style.width = this.getAttribute('w') + 'px';
    }
}

class CatMdi extends HTMLElement {
    constructor() {
        super();
        this.attachShadow({ mode: 'open' });
        this.shadowRoot.innerHTML = `
        <style>
            :host { display: flex; flex-direction: column; width: 1288px; box-sizing: border-box; padding: 2px 0 0 2px; background: #c9c9e6; }
        </style>
        <slot></slot>`;
    }
}

class CatDocWindow extends HTMLElement {
    constructor() {
        super();
        this.attachShadow({ mode: 'open' });
    }
    connectedCallback() {
        const active = this.hasAttribute('active');
        const btn = (d, cls = '') => `<div class="b ${cls}"><svg width="14" height="10" viewBox="0 0 14 10">${d}</svg></div>`;
        this.shadowRoot.innerHTML = `
        <style>
            :host { display: block; box-sizing: border-box; height: 208px; border: 1px solid #71757a; border-width: 1px 1px 2px 1px; background: #d3e6f3; }
            :host([active]) { background: linear-gradient(#a8c2dc 0, #c2d8ea 16%, #d8ebf6 100%); }
            .title { display: flex; align-items: center; box-sizing: border-box; height: 30px; padding: 4px 0 0 11px; background: linear-gradient(#b6cad2, #d6e5f0); color: #222c36; font: 16px "Noto Sans", sans-serif; }
            :host([active]) .title { background: linear-gradient(#a4c0da, #c0d6ea); }
            .star { width: 14px; height: 14px; flex: none; }
            .cap { flex: 1; text-align: center; }
            .b { display: flex; align-items: center; justify-content: center; width: 30px; height: 15px; margin-right: 3px; border: 1px solid #8b9ba9; border-radius: 2px; background: linear-gradient(#d8e6f0, #bccfdf); }
            .b:last-child { margin-right: 7px; }
            .close { background: linear-gradient(#e08a78 0, #c65a48 45%, #a83e30 55%, #c8503e 100%); border-color: #8a4840; }
            .canvas { position: relative; height: 166px; margin: 0 8px 0 7px; overflow: hidden; background: linear-gradient(#383366 0, #423c72 66%, #6c6890 82%, #b4b0c8 100%); }
        </style>
        <div class="title">
            <svg class="star" viewBox="0 0 24 24">${ICONS.star}</svg>
            <div class="cap">${this.getAttribute('caption')}</div>
            ${btn('<rect x="3" y="4" width="8" height="3" fill="#e8eef4" stroke="#445"/>')}
            ${btn('<rect x="3.500" y="1.500" width="7" height="6" fill="none" stroke="#445" stroke-width="1.400"/>')}
            ${active ? btn('<path d="M3 1l8 7M11 1L3 8" stroke="#fff" stroke-width="2.400"/>', 'close') : btn('<path d="M3 1l8 7M11 1L3 8" stroke="#556" stroke-width="2.200"/><path d="M3 1l8 7M11 1L3 8" stroke="#fff" stroke-width=".8"/>')}
        </div>
        <div class="canvas"><slot></slot></div>`;
    }
}

class CatTree extends HTMLElement {
    constructor() {
        super();
        this.attachShadow({ mode: 'open' });
        this.shadowRoot.innerHTML = `
        <style>
            :host { display: flex; flex-direction: column; position: absolute; left: 0; top: 2px; color: #fff; font: 14px/20px "Noto Sans", "Noto Sans CJK SC", sans-serif; }
        </style>
        <slot></slot>`;
    }
}

class CatNode extends HTMLElement {
    constructor() {
        super();
        this.attachShadow({ mode: 'open' });
    }
    connectedCallback() {
        const root = this.hasAttribute('root');
        const icon = this.getAttribute('icon');
        const plus = this.hasAttribute('plus') ? `<svg class="plus" width="15" height="15" viewBox="0 0 15 15"><circle cx="7.500" cy="7.500" r="7" fill="#8a8a8a"/><path d="M7.500 2.500v10M2.500 7.500h10" stroke="#000" stroke-width="3"/></svg>` : '';
        this.shadowRoot.innerHTML = `
        <style>
            :host { display: flex; align-items: center; height: 28px; position: relative; }
            .gut { position: relative; width: 21px; height: 28px; flex: none; }
            .gut::before { content: ""; position: absolute; left: 9px; top: 0; bottom: 0; width: 2px; background: #fff; }
            :host([last]) .gut::before { bottom: 13px; }
            .gut::after { content: ""; position: absolute; left: 9px; right: 0; top: 13px; height: 2px; background: #fff; }
            .plus { position: absolute; left: 2.5px; top: 6.5px; z-index: 1; }
            .ic { width: 26px; height: 24px; flex: none; display: flex; align-items: center; justify-content: center; }
            :host([root]) { padding-left: 2px; }
            :host([root]) .ic { width: 24px; justify-content: flex-start; }
            :host([root])::after { content: ""; position: absolute; left: 9px; top: 24px; bottom: 0; width: 2px; background: #fff; }
            svg.n { overflow: visible; flex: none; }
            .lb { margin-left: 2px; padding: 0 2px 0 0; height: 21px; line-height: 20px; background: #3b3668; white-space: nowrap; letter-spacing: .05px; }
            :host([root]) .lb { margin-left: 2px; padding-left: 1px; }
            .blue { background: #0a5fdc; outline: 1px solid #fff; outline-offset: -1px; }
            .orange { background: #ff7f0e; }
        </style>
        ${root ? '' : `<div class="gut">${plus}</div>`}
        ${icon ? `<div class="ic"><svg class="n" width="24" height="24" viewBox="0 0 24 24">${ICONS[icon]}</svg></div>` : ''}
        <div class="lb ${this.getAttribute('sel') || ''}">${this.getAttribute('label')}</div>`;
    }
}

class CatPart extends HTMLElement {
    constructor() {
        super();
        this.attachShadow({ mode: 'open' });
    }
    wires() {
        return `<g fill="none" stroke="#f08a24" stroke-width="1">
            <path d="M627 170l26 10v32l-26-9z"/><path d="M638 187l24-7 10 11-12 15-22 6z"/><path d="M618 199l35-29v35l-16 17-1-12z"/>
        </g>`;
    }
    product() {
        const o = '#f5861f';
        return `
        <path d="M599 195v30a46 22 0 0 0 92 0v-30z" fill="url(#body)"/>
        <path d="M599 225a46 22 0 0 0 92 0" fill="none" stroke="#111" stroke-width="2"/>
        <path d="M595 145v50a50 22 0 0 0 100 0v-50z" fill="url(#body)"/>
        <path d="M595 195a50 22 0 0 0 100 0" fill="none" stroke="${o}" stroke-width="2"/>
        <ellipse cx="645" cy="145" rx="50" ry="18" fill="#c2c2e6" stroke="${o}" stroke-width="2"/>
        <ellipse cx="645" cy="148" rx="39" ry="13" fill="#8888a6" stroke="${o}" stroke-width="2"/>
        <path d="M622 134v24a24 8 0 0 0 47 0v-24z" fill="url(#body)"/>
        <ellipse cx="645.500" cy="134" rx="23.500" ry="10" fill="#c6c6ea" stroke="#111" stroke-width="2"/>
        <path d="M636 144v18" stroke="#111" stroke-width="2"/>
        <path d="M625 165v52" stroke="${o}" stroke-width="2.400"/>
        <path d="M626 217v29" stroke="#111" stroke-width="2"/>
        ${this.wires()}`;
    }
    part2() {
        const o = '#f5861f';
        return `
        <path d="M595 145v50a50 22 0 0 0 100 0v-50z" fill="url(#body)"/>
        <path d="M595 195a50 22 0 0 0 100 0" fill="none" stroke="${o}" stroke-width="2"/>
        <ellipse cx="645" cy="145" rx="50" ry="18" fill="#c2c2e6" stroke="${o}" stroke-width="2"/>
        <ellipse cx="645" cy="148" rx="39" ry="13" fill="url(#hole)" stroke="${o}" stroke-width="2"/>
        <path d="M659 136v24" stroke="#d8924e" stroke-width="2"/>
        <path d="M625 165v52" stroke="${o}" stroke-width="2.400"/>
        <path d="M645 218h7" stroke="#111" stroke-width="2"/>
        ${this.wires()}`;
    }
    part1() {
        const o = '#f5861f';
        return `
        <path d="M599 197v29a46 21 0 0 0 92 0v-29z" fill="url(#body)"/>
        <path d="M599 226a46 21 0 0 0 92 0" fill="none" stroke="${o}" stroke-width="2"/>
        <ellipse cx="645" cy="197" rx="46" ry="19" fill="#c2c2e6" stroke="${o}" stroke-width="2"/>
        <path d="M622 135v70a23.500 9 0 0 0 47 0v-70z" fill="url(#body)"/>
        <path d="M622 205a23.500 9 0 0 0 47 0" fill="none" stroke="${o}" stroke-width="2"/>
        <ellipse cx="645.500" cy="135" rx="23.500" ry="11" fill="#c6c6ea" stroke="${o}" stroke-width="2"/>
        <path d="M636 146v64" stroke="#d8924e" stroke-width="2"/>
        <path d="M626 216v30" stroke="${o}" stroke-width="2"/>
        ${this.wires()}`;
    }
    connectedCallback() {
        const kind = this.getAttribute('kind');
        this.shadowRoot.innerHTML = `
        <style>
            :host { display: block; position: absolute; left: 570px; top: 7px; width: 130px; height: 135px; }
        </style>
        <svg width="130" height="135" viewBox="580 120 130 135">
            <defs>
                <linearGradient id="body"><stop offset="0" stop-color="#a9a9d6"/><stop offset=".22" stop-color="#bcbce2"/><stop offset=".55" stop-color="#a8a8ca"/><stop offset=".88" stop-color="#767690"/><stop offset="1" stop-color="#8a8aa4"/></linearGradient>
                <linearGradient id="hole"><stop offset="0" stop-color="#b0b0d0"/><stop offset=".35" stop-color="#70708a"/><stop offset=".75" stop-color="#a8a8c8"/><stop offset="1" stop-color="#c4c4e0"/></linearGradient>
            </defs>
            ${this[kind]()}
        </svg>`;
    }
}

class CatCompass extends HTMLElement {
    constructor() {
        super();
        this.attachShadow({ mode: 'open' });
        const s = '#d9c9fb';
        this.shadowRoot.innerHTML = `
        <style>
            :host { display: block; position: absolute; left: 1125px; top: 12px; width: 140px; height: 140px; }
            text { font: 14px "Liberation Sans", sans-serif; }
        </style>
        <svg width="140" height="140" viewBox="1135 125 140 140">
            <path d="M1173 144q34 14 40 48l-40-8-18 18q-2-34 18-58z" fill="#1d4f68" stroke="${s}" stroke-width="1.600"/>
            <path d="M1160 205l-18 19q14 11 31 11 30 0 34-17l-2-5-32-6z" fill="#1d4f68" stroke="${s}" stroke-width="1.600"/>
            <path d="M1173 132v85" stroke="${s}" stroke-width="1.600"/>
            <circle cx="1173" cy="132" r="3.200" fill="${s}"/>
            <rect x="1169" y="214" width="9" height="8" fill="#e0000c"/>
            <text x="1177" y="139" fill="#f4e040">z</text>
            <text x="1218" y="201" fill="#f4e040">y</text>
            <text x="1160" y="210" fill="#f4e040">x</text>
            <path d="M1244 232v19l20 4M1244 251l-5 3" fill="none" stroke="#fff" stroke-width="1.100"/>
            <text x="1243" y="232" fill="#fff">z</text>
            <text x="1264" y="257" fill="#fff">y</text>
            <text x="1233" y="262" fill="#fff">x</text>
        </svg>`;
    }
}

class CatSidebar extends HTMLElement {
    constructor() {
        super();
        this.attachShadow({ mode: 'open' });
        this.shadowRoot.innerHTML = `
        <style>
            :host { display: flex; width: 76px; box-sizing: border-box; background: linear-gradient(90deg, #5c5c66 0, #fff 3%, #f2f2fa 9%, #cfcfe9 20%, #c9c9e6 94%, #dcdcf0 100%); }
            .a { width: 46px; padding-right: 6px; box-sizing: border-box; flex: none; }
            .b { width: 30px; flex: none; }
            ::slotted(div) { display: flex; flex-direction: column; align-items: center; }
        </style>
        <div class="a"><slot name="a"></slot></div>
        <div class="b"><slot name="b"></slot></div>`;
    }
}

class CatMore extends HTMLElement {
    constructor() {
        super();
        this.attachShadow({ mode: 'open' });
        this.shadowRoot.innerHTML = `
        <style>
            :host { display: block; flex: none; width: 32px; text-align: center; color: #a8a8bc; font: 13px/14px "Liberation Sans", sans-serif; margin-bottom: 14px; }
        </style>
        <span>»</span>`;
    }
}

class CatLogo extends HTMLElement {
    constructor() {
        super();
        this.attachShadow({ mode: 'open' });
        this.shadowRoot.innerHTML = `
        <style>
            :host { display: block; flex: none; width: 42px; height: 34px; }
            svg { overflow: visible; }
            text { font: italic 700 12px "Liberation Sans", sans-serif; fill: #2a3a80; }
        </style>
        <svg width="42" height="34" viewBox="0 0 42 34">
            <path d="M7 1q8-1 8 3t-6 5q6 0 5 3" fill="none" stroke="#c82828" stroke-width="1.400"/>
            <path d="M-1 12h8q4 0 3 4t-7 7l-5 1" fill="none" stroke="#2a3a80" stroke-width="1.200"/>
            <path d="M21 10q-8-1-9 3t3 5-5 6" fill="none" stroke="#d8a020" stroke-width="1.800"/>
            <text x="-4" y="31">CATIA</text>
        </svg>`;
    }
}

class CatStatusbar extends HTMLElement {
    constructor() {
        super();
        this.attachShadow({ mode: 'open' });
    }
    connectedCallback() {
        this.shadowRoot.innerHTML = `
        <style>
            :host { display: flex; height: 25px; box-sizing: border-box; background: #c9c9e6; border-top: 1px solid #555; border-bottom: 2px solid #5d86ad; color: #222; font: 12.5px/22px "Noto Sans CJK SC", sans-serif; }
            .msg { flex: 1; padding-left: 4px; }
            .field { width: 298px; background: #fff; margin-top: 1px; }
            .btn { width: 30px; margin: 1px 0 0 3px; display: flex; align-items: center; justify-content: center; background: #d9d9ee; border-left: 1px solid #eee; }
        </style>
        <div class="msg">${this.getAttribute('message')}</div>
        <div class="field"></div>
        <div class="btn"><svg width="16" height="14" viewBox="0 0 16 14"><path d="M2 2h8v7H2z" fill="#eee" stroke="#999"/><path d="M14 3v9H3" fill="none" stroke="#999"/></svg></div>
        <div class="btn"><svg width="18" height="18" viewBox="0 0 18 18"><rect x="1" y="1" width="16" height="15" fill="#fff" stroke="#333"/><circle cx="9" cy="8" r="5" fill="#c8f0f0" stroke="#222"/><path d="M9 5v1M9 7v4" stroke="#1030a0" stroke-width="1.600"/></svg></div>`;
    }
}

class CatFloatBar extends HTMLElement {
    constructor() {
        super();
        this.attachShadow({ mode: 'open' });
    }
    connectedCallback() {
        const h = this.getAttribute('inner') || 35;
        this.shadowRoot.innerHTML = `
        <style>
            :host { display: block; box-sizing: border-box; background: #5a89b8; border: 1px solid #4a7299; padding: 0 6px 7px 7px; color: #2c4763; font: 15px "Noto Sans CJK SC", sans-serif; }
            .head { display: grid; grid-template-columns: 1fr auto 1fr; align-items: center; box-sizing: border-box; height: 30px; padding-bottom: 2px; }
            .head span { grid-column: 2; }
            .x { grid-column: 3; justify-self: end; display: flex; align-items: center; justify-content: center; width: 19px; height: 19px; margin: 2px 1px 0 0; background: #c9545c; }
            .inner { position: relative; display: flex; align-items: center; padding-left: 12px; background: linear-gradient(#f4f4fb 0, #e4e4f3 25%, #c9c9e6 65%, #b0b0c8 85%, #70708a 100%); box-shadow: 0 1px 1px rgba(30,40,70,.5); }
            .inner::before { content: ""; position: absolute; left: 4px; top: 4px; width: 2px; height: 17px; background: #f4f4fa; box-shadow: 1px 1px 0 #9d9db4; }
        </style>
        <div class="head"><span>${this.getAttribute('caption')}</span><div class="x"><svg width="7" height="7" viewBox="0 0 7 7"><path d="M1 1l5 5M6 1L1 6" stroke="#fff" stroke-width="1.500"/></svg></div></div>
        <div class="inner" style="height:${h}px"><slot></slot></div>`;
    }
}

class CatPointer extends HTMLElement {
    constructor() {
        super();
        this.attachShadow({ mode: 'open' });
        this.shadowRoot.innerHTML = `
        <style>:host { display: block; width: 14px; height: 21px; }</style>
        <svg width="14" height="21" viewBox="0 0 14 21"><path d="M1 1v16l4-4 3 7 3-1-3-7h5z" fill="#fff" stroke="#111"/></svg>`;
    }
}

customElements.define('cat-app', CatApp);
customElements.define('cat-titlebar', CatTitlebar);
customElements.define('cat-menubar', CatMenubar);
customElements.define('cat-toolbar', CatToolbar);
customElements.define('cat-grip', CatGrip);
customElements.define('cat-icon', CatIcon);
customElements.define('cat-combo', CatCombo);
customElements.define('cat-mdi', CatMdi);
customElements.define('cat-doc-window', CatDocWindow);
customElements.define('cat-tree', CatTree);
customElements.define('cat-node', CatNode);
customElements.define('cat-part', CatPart);
customElements.define('cat-compass', CatCompass);
customElements.define('cat-sidebar', CatSidebar);
customElements.define('cat-more', CatMore);
customElements.define('cat-logo', CatLogo);
customElements.define('cat-statusbar', CatStatusbar);
customElements.define('cat-float-bar', CatFloatBar);
customElements.define('cat-pointer', CatPointer);
</script>
</body>
</html>
